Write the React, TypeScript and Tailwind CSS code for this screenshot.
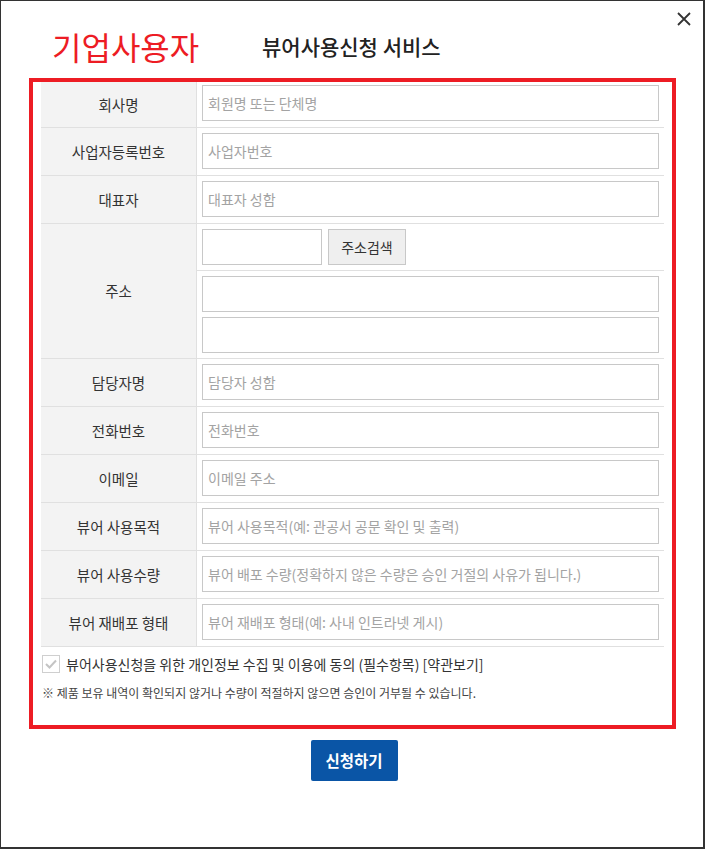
import React from 'react';

const FONT = { fontFamily: '"Noto Sans CJK KR", "Noto Sans", sans-serif' };

const rows = [
  { label: '회사명', ph: '회원명 또는 단체명' },
  { label: '사업자등록번호', ph: '사업자번호' },
  { label: '대표자', ph: '대표자 성함' },
];

const rows2 = [
  { label: '담당자명', ph: '담당자 성함' },
  { label: '전화번호', ph: '전화번호' },
  { label: '이메일', ph: '이메일 주소' },
  { label: '뷰어 사용목적', ph: '뷰어 사용목적(예: 관공서 공문 확인 및 출력)' },
  { label: '뷰어 사용수량', ph: '뷰어 배포 수량(정확하지 않은 수량은 승인 거절의 사유가 됩니다.)' },
  { label: '뷰어 재배포 형태', ph: '뷰어 재배포 형태(예: 사내 인트라넷 게시)' },
];

function Field({ ph, className = '' }: { ph?: string; className?: string }) {
  return (
    <input
      placeholder={ph}
      className={`h-[36px] border border-[#c8c8c8] bg-white pl-[5px] text-[14px] text-[#333] outline-none placeholder:text-[#a3a3a3] ${className}`}
      style={FONT}
    />
  );
}

function Row({ label, ph, first }: { label: string; ph: string; first?: boolean }) {
  return (
    <div className="flex border-b border-[#e0e0e0]">
      <div className="flex w-[156px] shrink-0 items-center justify-center border-r border-[#e0e0e0] bg-[#f3f3f3] text-[14.5px] text-[#333]">
        {label}
      </div>
      <div className={`flex flex-1 px-[5px] pb-[6px] ${first ? 'pt-[3px]' : 'pt-[5px]'}`}>
        <Field ph={ph} className="w-full" />
      </div>
    </div>
  );
}

export default function App() {
  return (
    <div
      className="relative h-[849px] w-[705px] border-t border-l border-r-2 border-b-2 border-[#333] bg-white"
      style={FONT}
    >
      {/* close */}
      <button className="absolute right-[12px] top-[10px] flex h-[15px] w-[15px] items-center justify-center">
        <svg width="14" height="14" viewBox="0 0 14 14" fill="none" stroke="#333" strokeWidth="1.8">
          <path d="M1 1 L13 13 M13 1 L1 13" />
        </svg>
      </button>

      {/* header */}
      <div className="flex h-[77px] items-center pl-[51px] pt-[13px]">
        <span className="w-[210px] text-[32px] leading-none text-[#ed1c24]">기업사용자</span>
        <span className="text-[21px] font-medium leading-none text-[#222]">뷰어사용신청 서비스</span>
      </div>

      {/* form */}
      <div className="ml-[28px] w-[647px] border-4 border-[#ed1c24] px-[8px] pb-[24px]">
        {rows.map((r, i) => (
          <Row key={r.label} label={r.label} ph={r.ph} first={i === 0} />
        ))}

        {/* address */}
        <div className="flex border-b border-[#e0e0e0]">
          <div className="flex w-[156px] shrink-0 items-center justify-center border-r border-[#e0e0e0] bg-[#f3f3f3] text-[14.5px] text-[#333]">
            주소
          </div>
          <div className="flex flex-1 flex-col">
            <div className="flex gap-[6px] border-b border-[#e0e0e0] px-[5px] pb-[5px] pt-[5px]">
              <Field className="w-[120px]" />
              <button className="h-[36px] w-[78px] border border-[#c8c8c8] bg-[#efefef] text-[14px] text-[#333]">
                주소검색
              </button>
            </div>
            <div className="flex flex-col gap-[5px] p-[5px]">
              <Field className="w-full" />
              <Field className="w-full" />
            </div>
          </div>
        </div>

        {rows2.map((r) => (
          <Row key={r.label} label={r.label} ph={r.ph} />
        ))}

        {/* agreement */}
        <div className="mt-[8px] flex h-[18px] items-center gap-[6px] pl-[1px]">
          <span className="flex h-[18px] w-[18px] items-center justify-center border border-[#cfcfcf] bg-white">
            <svg width="12" height="10" viewBox="0 0 12 10" fill="none" stroke="#c4c4c4" strokeWidth="2">
              <path d="M1 5 L4.5 8.5 L11 1.5" />
            </svg>
          </span>
          <span className="text-[14px] text-[#333]">
            뷰어사용신청을 위한 개인정보 수집 및 이용에 동의 (필수항목) [약관보기]
          </span>
        </div>
        <p className="mt-[12px] pl-[1px] text-[12px] leading-[16px] text-[#444]">
          ※ 제품 보유 내역이 확인되지 않거나 수량이 적절하지 않으면 승인이 거부될 수 있습니다.
        </p>
      </div>

      {/* submit */}
      <div className="mt-[11px] flex justify-center pl-[4px]">
        <button className="h-[41px] w-[87px] rounded-[2px] bg-[#0a55a6] text-[15.5px] font-bold text-white">
          신청하기
        </button>
      </div>
    </div>
  );
}
